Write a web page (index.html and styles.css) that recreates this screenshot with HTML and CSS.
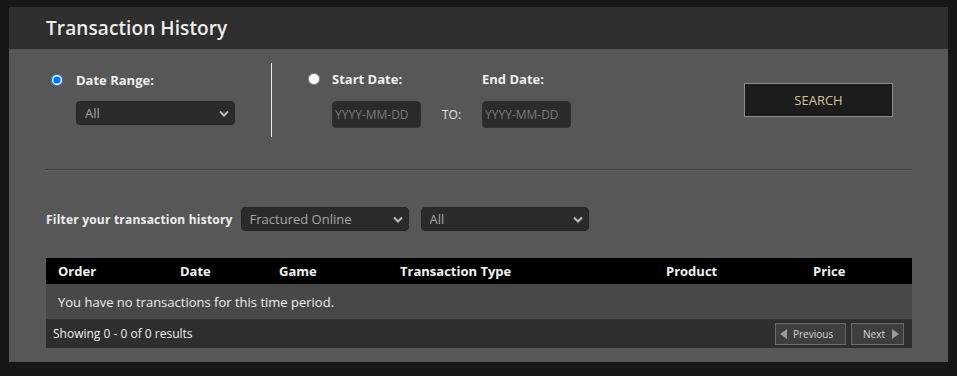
FILE: index.html
```html
<!DOCTYPE html>
<html lang="en">
<head>
	<meta charset="UTF-8">
	<title>Transaction History</title>
<link rel="stylesheet" href="styles.css">
</head>
<body>
	<div class="panel">
		<div class="panel-head">
			<h1>Transaction History</h1>
		</div>
		<div class="panel-body">
			<div class="dates">
				<div class="range">
					<label class="opt">
						<input type="radio" name="mode" checked>
						<span>Date Range:</span>
					</label>
					<div class="select range-select">
						<select><option>All</option></select>
						<svg class="chev" width="10" height="7" viewBox="0 0 10 7"><path d="M1 1.5 L5 5.5 L9 1.5" fill="none" stroke="#bbb" stroke-width="2"/></svg>
					</div>
				</div>
				<div class="custom">
					<input class="radio" type="radio" name="mode">
					<span class="lbl start-lbl">Start Date:</span>
					<span class="lbl end-lbl">End Date:</span>
					<input class="date start" type="text" placeholder="YYYY-MM-DD">
					<span class="to">TO:</span>
					<input class="date end" type="text" placeholder="YYYY-MM-DD">
				</div>
				<button class="search">SEARCH</button>
			</div>

			<div class="filter">
				<span class="filter-lbl">Filter your transaction history</span>
				<div class="select">
					<select><option>Fractured Online</option></select>
					<svg class="chev" width="10" height="7" viewBox="0 0 10 7"><path d="M1 1.5 L5 5.5 L9 1.5" fill="none" stroke="#bbb" stroke-width="2"/></svg>
				</div>
				<div class="select">
					<select><option>All</option></select>
					<svg class="chev" width="10" height="7" viewBox="0 0 10 7"><path d="M1 1.5 L5 5.5 L9 1.5" fill="none" stroke="#bbb" stroke-width="2"/></svg>
				</div>
			</div>

			<table class="history">
				<colgroup>
					<col style="width:122px">
					<col style="width:99px">
					<col style="width:121px">
					<col style="width:266px">
					<col style="width:147px">
					<col>
				</colgroup>
				<thead>
					<tr>
						<th>Order</th>
						<th>Date</th>
						<th>Game</th>
						<th>Transaction Type</th>
						<th>Product</th>
						<th>Price</th>
					</tr>
				</thead>
				<tbody>
					<tr class="empty">
						<td colspan="6">You have no transactions for this time period.</td>
					</tr>
				</tbody>
				<tfoot>
					<tr>
						<td colspan="6">
							<div class="pager">
								<span>Showing 0 - 0 of 0 results</span>
								<div class="pages">
									<a href="javascript:;" class="page prev"><i class="tri tri-l"></i>Previous</a>
									<a href="javascript:;" class="page next">Next<i class="tri tri-r"></i></a>
								</div>
							</div>
						</td>
					</tr>
				</tfoot>
			</table>
		</div>
	</div>
</body>
</html>
```

FILE: styles.css
```css
* {
	margin: 0;
	padding: 0;
	box-sizing: border-box;
}
body {
	background: #171717;
	font-family: "Open Sans", "Liberation Sans", sans-serif;
	color: #eee;
}
.panel {
	margin: 7px 9px 0;
	height: 355px;
	background: #575757;
}
.panel-head {
	height: 42px;
	background: #2f2f2f;
	padding-left: 37px;
	display: flex;
	align-items: center;
}
.panel-head h1 {
	font-size: 19px;
	font-weight: 600;
	color: #eee;
	letter-spacing: 0.1px;
}
.panel-body {
	padding: 14px 36px 0;
}

/* date selection */
.dates {
	display: flex;
	align-items: flex-start;
	height: 107px;
	border-bottom: 1px solid #3d3d3d;
	box-shadow: 0 1px 0 #666;
}
.range {
	width: 227px;
	height: 74px;
	border-right: 1px solid #e6e6e6;
	padding-top: 8px;
}
.opt {
	display: flex;
	align-items: center;
	gap: 13px;
	padding-left: 6px;
	font-size: 13px;
	font-weight: 700;
}
.opt input, .custom .radio {
	width: 12px;
	height: 12px;
	margin: 0;
}
.select {
	position: relative;
	width: 168px;
	height: 24px;
}
.range-select {
	margin: 12px 0 0 31px;
	width: 159px;
}
.select select {
	appearance: none;
	-webkit-appearance: none;
	width: 100%;
	height: 100%;
	background: #2b2b2b;
	border: 1px solid #262626;
	border-radius: 4px;
	color: #a6a6a6;
	font-family: inherit;
	font-size: 13px;
	padding: 0 8px;
	outline: none;
}
.chev {
	position: absolute;
	right: 6px;
	top: 9px;
	pointer-events: none;
}
.custom {
	margin-left: 36px;
	display: grid;
	grid-template-columns: 24px 89px 61px 89px;
	grid-template-rows: 18px 27px;
	row-gap: 13px;
	padding-top: 7px;
	align-items: center;
}
.custom .radio {
	grid-row: 1;
	grid-column: 1;
}
.custom .lbl {
	grid-row: 1;
	font-size: 13px;
	font-weight: 700;
	white-space: nowrap;
}
.custom .start-lbl {
	grid-column: 2;
}
.custom .end-lbl {
	grid-column: 4;
}
.date {
	grid-row: 2;
	height: 27px;
	width: 89px;
	background: #2b2b2b;
	border: 1px solid #303030;
	border-radius: 4px;
	color: #ccc;
	font-family: inherit;
	font-size: 12px;
	padding: 0 2px;
	outline: none;
}
.date.start {
	grid-column: 2;
}
.date.end {
	grid-column: 4;
}
.date::placeholder {
	color: #7a7a7a;
}
.to {
	grid-row: 2;
	grid-column: 3;
	font-size: 12px;
	padding-left: 21px;
	color: #e0e0e0;
}
.search {
	margin: 20px 19px 0 auto;
	width: 149px;
	height: 34px;
	background: #1b1b1b;
	border: 1px solid #8c8c8c;
	color: #d6c19c;
	font-family: inherit;
	font-size: 13px;
	cursor: pointer;
}

/* filter */
.filter {
	margin-top: 37px;
	display: flex;
	align-items: center;
	gap: 12px;
	padding-left: 1px;
}
.filter-lbl {
	font-size: 12px;
	font-weight: 700;
	letter-spacing: 0.2px;
	margin-right: -4px;
}
.filter .select {
	height: 24px;
}

/* table */
.history {
	margin: 27px 0 0 1px;
	width: 866px;
	border-collapse: collapse;
	table-layout: fixed;
	font-size: 13px;
}
.history th {
	background: #000;
	height: 26px;
	text-align: left;
	font-weight: 700;
	padding-left: 12px;
	color: #f2f2f2;
}
.history .empty td {
	background: #484848;
	height: 35px;
	padding: 2px 0 0 12px;
	color: #eee;
	border-bottom: 1px solid #333;
}
.history tfoot td {
	background: #2e2e2e;
	height: 29px;
	padding: 0 8px 0 7px;
	font-size: 12px;
}
.pager {
	display: flex;
	align-items: center;
	justify-content: space-between;
}
.pages {
	display: flex;
	gap: 5px;
}
.page {
	display: flex;
	align-items: center;
	gap: 6px;
	height: 22px;
	padding: 0 5px;
	border: 1px solid #6a6a6a;
	background: #3e3e3e;
	color: #d6d6d6;
	font-size: 10px;
	text-decoration: none;
}
.prev {
	width: 71px;
	padding-left: 4px;
}
.next {
	width: 53px;
	padding-left: 11px;
	gap: 7px;
}
.tri {
	width: 0;
	height: 0;
	border-top: 5px solid transparent;
	border-bottom: 5px solid transparent;
}
.tri-l {
	border-right: 7px solid #9a9a9a;
}
.tri-r {
	border-left: 7px solid #9a9a9a;
}
```
